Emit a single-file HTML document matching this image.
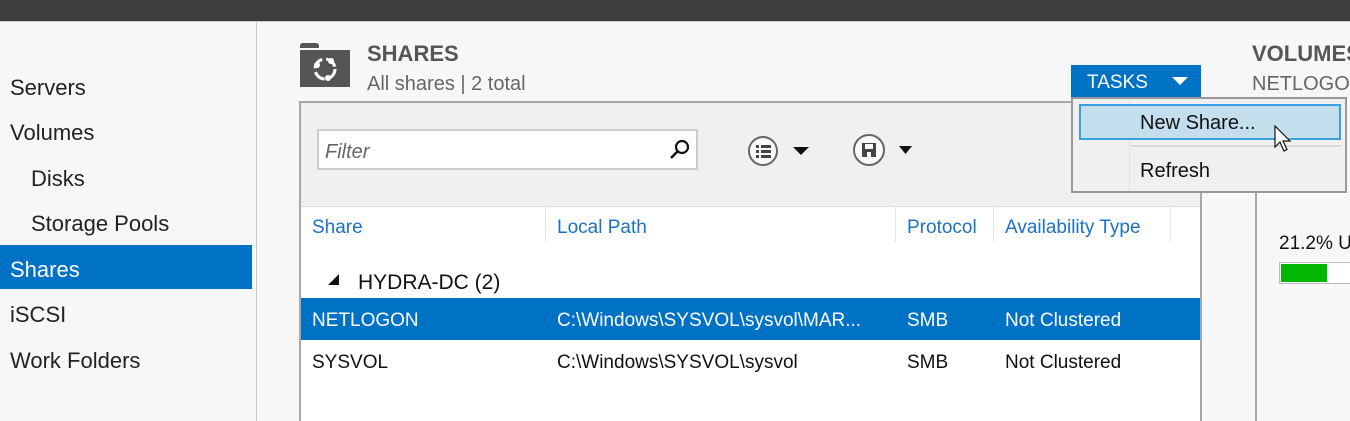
<!DOCTYPE html>
<html><head><style>
*{margin:0;padding:0;box-sizing:border-box}
html,body{width:1350px;height:421px;overflow:hidden}
body{background:#f7f7f7;font-family:"Liberation Sans","DejaVu Sans",sans-serif;position:relative}
.a{position:absolute;white-space:nowrap}
.nav{font-size:22px;color:#222}
.hdr{font-size:19px;color:#1a72c4}
.cell{font-size:19px;color:#111}
</style></head><body>
<div class="a" style="left:0;top:0;width:1350px;height:21px;background:#3e3e3e"></div>
<div class="a" style="left:0;top:21px;width:1350px;height:1px;background:#ccc"></div>
<div class="a" style="left:256px;top:22px;width:1px;height:399px;background:#c8c8c8"></div>
<div class="a nav" style="left:10px;top:75px">Servers</div>
<div class="a nav" style="left:10px;top:120px">Volumes</div>
<div class="a nav" style="left:31px;top:166px">Disks</div>
<div class="a nav" style="left:31px;top:211px">Storage Pools</div>
<div class="a" style="left:0;top:245px;width:252px;height:44px;background:#0072c6"></div>
<div class="a nav" style="left:10px;top:257px;color:#fff">Shares</div>
<div class="a nav" style="left:10px;top:302px">iSCSI</div>
<div class="a nav" style="left:10px;top:348px">Work Folders</div>

<svg class="a" style="left:298px;top:42px" width="54" height="46" viewBox="0 0 54 46">
<path d="M2 4 Q2 1 5 1 H18 Q21 1 21 4 V6 H2Z" fill="#555"/>
<rect x="2" y="8" width="50" height="37" fill="#555"/>
<circle cx="27" cy="27" r="10" fill="none" stroke="#fff" stroke-width="3" stroke-dasharray="12 4"/>
<circle cx="19" cy="23" r="3" fill="#fff"/><circle cx="33" cy="19" r="3" fill="#fff"/><circle cx="30" cy="36" r="3" fill="#fff"/>
</svg>
<div class="a" style="left:367px;top:41px;font-size:22px;font-weight:bold;color:#555">SHARES</div>
<div class="a" style="left:367px;top:73px;font-size:20px;color:#666">All shares | 2 total</div>

<div class="a" style="left:299px;top:101px;width:903px;height:330px;border:2px solid #a8a8a8;background:#f0f0f0"></div>
<div class="a" style="left:301px;top:206px;width:899px;height:220px;background:#fff;border-top:1px solid #ddd"></div>
<div class="a" style="left:317px;top:129px;width:381px;height:41px;background:#fff;border:2px solid #ccc"></div>
<div class="a" style="left:325px;top:141px;font-size:20px;font-style:italic;color:#666">Filter</div>
<svg class="a" style="left:668px;top:138px" width="24" height="24"><circle cx="14" cy="9" r="6" fill="none" stroke="#111" stroke-width="2.2"/><line x1="10" y1="13" x2="3" y2="20" stroke="#111" stroke-width="2.6"/></svg>
<svg class="a" style="left:746px;top:134px" width="70" height="34"><circle cx="17" cy="17" r="14" fill="#fafafa" stroke="#666" stroke-width="2"/><g fill="#444"><rect x="10" y="11" width="3" height="3"/><rect x="15" y="11" width="10" height="3"/><rect x="10" y="16" width="3" height="3"/><rect x="15" y="16" width="10" height="3"/><rect x="10" y="21" width="3" height="3"/><rect x="15" y="21" width="10" height="3"/></g><path d="M47 13 H63 L55 21Z" fill="#111"/></svg>
<svg class="a" style="left:851px;top:133px" width="70" height="34"><circle cx="18" cy="17" r="15" fill="#fafafa" stroke="#666" stroke-width="2"/><rect x="11" y="10" width="14" height="14" fill="#444"/><rect x="14" y="11" width="8" height="5" fill="#fafafa"/><rect x="16" y="19" width="4" height="5" fill="#fafafa"/><path d="M48 13 H61 L54.5 21Z" fill="#111"/></svg>

<div class="a" style="left:545px;top:207px;width:1px;height:35px;background:#e6e6e6"></div>
<div class="a" style="left:895px;top:207px;width:1px;height:35px;background:#e6e6e6"></div>
<div class="a" style="left:993px;top:207px;width:1px;height:35px;background:#e6e6e6"></div>
<div class="a" style="left:1170px;top:207px;width:1px;height:35px;background:#e6e6e6"></div>
<div class="a hdr" style="left:312px;top:217px">Share</div>
<div class="a hdr" style="left:557px;top:217px">Local Path</div>
<div class="a hdr" style="left:907px;top:217px">Protocol</div>
<div class="a hdr" style="left:1005px;top:217px">Availability Type</div>
<svg class="a" style="left:327px;top:273px" width="14" height="14"><path d="M1 12 H12 V1Z" fill="#111"/></svg>
<div class="a" style="left:358px;top:271px;font-size:21px;color:#111">HYDRA-DC (2)</div>
<div class="a" style="left:301px;top:298px;width:899px;height:42px;background:#0072c6"></div>
<div class="a cell" style="left:312px;top:310px;color:#fff">NETLOGON</div>
<div class="a cell" style="left:557px;top:310px;color:#fff">C:\Windows\SYSVOL\sysvol\MAR...</div>
<div class="a cell" style="left:907px;top:310px;color:#fff">SMB</div>
<div class="a cell" style="left:1005px;top:310px;color:#fff">Not Clustered</div>
<div class="a cell" style="left:312px;top:352px">SYSVOL</div>
<div class="a cell" style="left:557px;top:352px">C:\Windows\SYSVOL\sysvol</div>
<div class="a cell" style="left:907px;top:352px">SMB</div>
<div class="a cell" style="left:1005px;top:352px">Not Clustered</div>

<div class="a" style="left:1071px;top:65px;width:130px;height:32px;background:#0072c6"></div>
<div class="a" style="left:1087px;top:72px;font-size:19px;color:#fff">TASKS</div>
<svg class="a" style="left:1170px;top:76px" width="20" height="12"><path d="M2 1 H18 L10 9Z" fill="#fff"/></svg>

<div class="a" style="left:1252px;top:41px;font-size:22px;font-weight:bold;color:#555">VOLUMES</div>
<div class="a" style="left:1252px;top:73px;font-size:20px;color:#666">NETLOGON</div>
<div class="a" style="left:1255px;top:190px;width:2px;height:231px;background:#a8a8a8"></div>
<div class="a" style="left:1279px;top:233px;font-size:19px;color:#111">21.2% U</div>
<div class="a" style="left:1279px;top:262px;width:80px;height:22px;border:1px solid #bbb;background:#fff"></div>
<div class="a" style="left:1281px;top:264px;width:46px;height:18px;background:#00b800"></div>

<div class="a" style="left:1071px;top:97px;width:276px;height:96px;background:#f0f0f0;border:2px solid #999"></div>
<div class="a" style="left:1129px;top:99px;width:1px;height:92px;background:#e0e0e0"></div>
<div class="a" style="left:1079px;top:104px;width:262px;height:36px;background:#c3dfee;border:2px solid #3aa0dd"></div>
<div class="a" style="left:1131px;top:145px;width:210px;height:2px;background:#d8d8d8"></div>
<div class="a" style="left:1140px;top:112px;font-size:20px;color:#111">New Share...</div>
<div class="a" style="left:1140px;top:160px;font-size:20px;color:#111">Refresh</div>
<svg class="a" style="left:1274px;top:125px" width="20" height="30"><path d="M1 1 V22 L6 17 L10 26 L13 24.5 L9 16 H16Z" fill="#fff" stroke="#111" stroke-width="1.2"/></svg>
</body></html>
